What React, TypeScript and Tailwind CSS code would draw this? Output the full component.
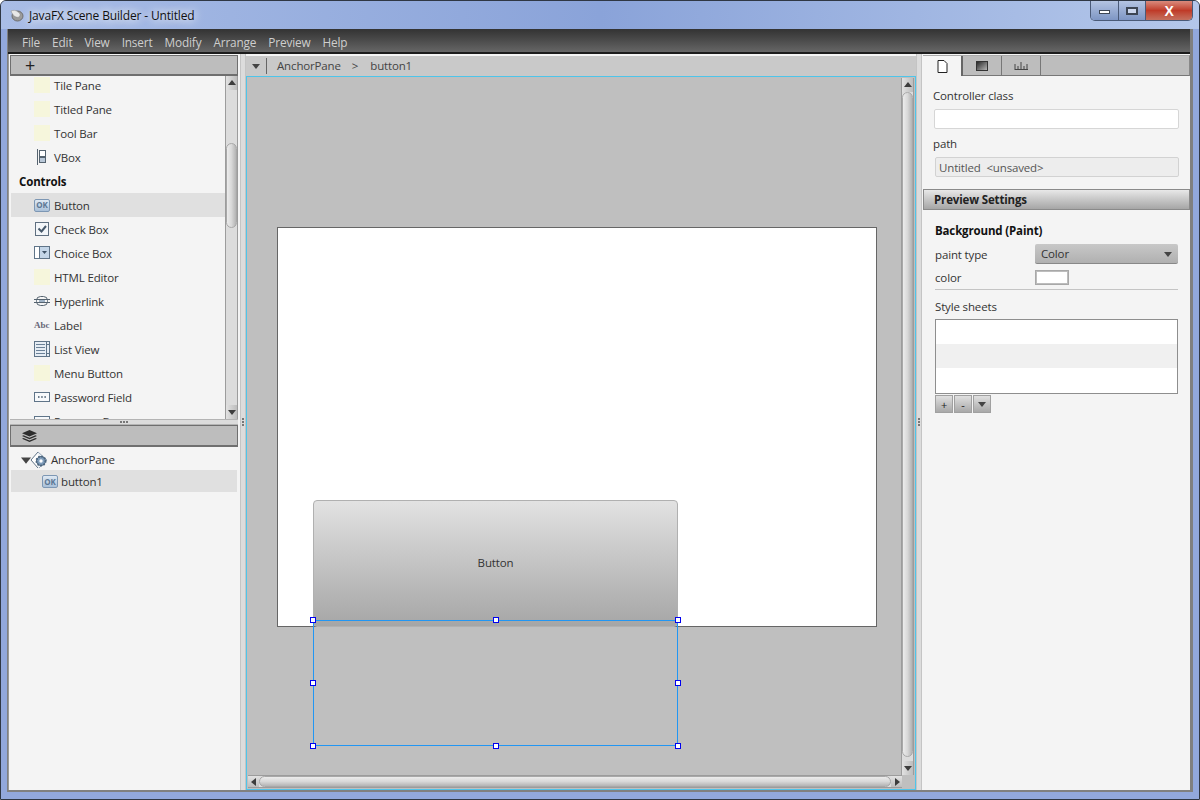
import React from "react";

const FONT = "font-['Open_Sans','Noto_Sans',sans-serif]";

function Blank() {
  return <div className="w-[16px] h-[16px] bg-[#f6f6dc]" />;
}
function OkIcon() {
  return (
    <div className="w-[16px] h-[13px] rounded-[2px] border border-[#7d97b4] bg-gradient-to-b from-[#dfe9f3] to-[#a9c0d8] flex items-center justify-center text-[8px] tracking-normal leading-none font-bold text-[#5b7794]">
      OK
    </div>
  );
}
function VBoxIcon() {
  return (
    <svg width="16" height="16" viewBox="0 0 16 16">
      <path d="M3.5 0v16" stroke="#55636f" />
      <rect x="5.5" y="1.5" width="6" height="6" fill="#fff" stroke="#55636f" />
      <rect x="5.5" y="8.5" width="6" height="5" fill="#b9c8d8" stroke="#55636f" />
    </svg>
  );
}
function CheckIcon() {
  return (
    <svg width="16" height="16" viewBox="0 0 16 16">
      <rect x="1.5" y="1.5" width="13" height="13" fill="#f3f6f9" stroke="#5f6f80" />
      <path d="M4.5 7.5l3 3 4.5-5.5" fill="none" stroke="#47596b" strokeWidth="2" />
    </svg>
  );
}
function ChoiceIcon() {
  return (
    <svg width="16" height="14" viewBox="0 0 16 14">
      <rect x="0.5" y="0.5" width="15" height="12" fill="#fff" stroke="#5f7488" />
      <rect x="5" y="1" width="10" height="11" fill="#c4d6e8" />
      <path d="M5.5 0v13" stroke="#5f7488" />
      <path d="M8 5h5l-2.500 3z" fill="#3f5367" />
    </svg>
  );
}
function LinkIcon() {
  return (
    <svg width="16" height="12" viewBox="0 0 16 12">
      <rect x="2.500" y="1.500" width="11" height="9" rx="4" fill="none" stroke="#55636f" />
      <path d="M0 4.500h16M0 7.500h16" stroke="#55636f" />
      <path d="M5 6h6" stroke="#9fb3c6" strokeWidth="2" />
    </svg>
  );
}
function AbcIcon() {
  return <div className="w-[16px] text-[9px] tracking-normal leading-none text-[#667] font-['Liberation_Serif',serif] font-bold whitespace-nowrap">Abc</div>;
}
function ListIcon() {
  return (
    <svg width="16" height="16" viewBox="0 0 16 16">
      <rect x="0.500" y="0.500" width="15" height="15" fill="#e6edf4" stroke="#5f7488" />
      <path d="M2 3.500h9M2 6.500h9M2 9.500h9M2 12.500h9" stroke="#6b8197" />
      <path d="M12.500 0v16" stroke="#5f7488" />
      <path d="M13 3.500h2M13 12.500h2" stroke="#5f7488" />
    </svg>
  );
}
function PwdIcon() {
  return (
    <svg width="16" height="10" viewBox="0 0 16 10">
      <rect x="0.500" y="0.500" width="15" height="9" fill="#f7f9fb" stroke="#5f7488" />
      <path d="M4 5h1.500M7.200 5h1.500M10.400 5h1.500" stroke="#3f5367" strokeWidth="1.500" />
    </svg>
  );
}
function GearDiamond() {
  return (
    <svg width="18" height="18" viewBox="0 0 18 18">
      <path d="M8 1L1 9l7 8" fill="#fff" stroke="#607487" />
      <path d="M8 1l9 8-8 8" fill="#eef3f7" stroke="#9aaabb" />
      <circle cx="11" cy="10" r="4.500" fill="#7f9dbb" stroke="#4c657d" />
      <circle cx="11" cy="10" r="4.500" fill="none" stroke="#4c657d" strokeWidth="2" strokeDasharray="1.500 1.500" />
      <circle cx="11" cy="10" r="1.700" fill="#fff" />
    </svg>
  );
}
function Layers() {
  return (
    <svg width="15" height="12" viewBox="0 0 15 12">
      <path d="M7.500 0L15 3.200 7.500 6.400 0 3.200z" fill="#2d2d2d" />
      <path d="M1.500 5.200L0 6l7.500 3.200L15 6l-1.500-.8-6 2.600z" fill="#2d2d2d" />
      <path d="M1.500 8L0 8.800 7.500 12 15 8.800 13.500 8l-6 2.600z" fill="#2d2d2d" />
    </svg>
  );
}
function AppIcon() {
  return (
    <svg width="14" height="13" viewBox="0 0 14 13">
      <ellipse cx="7.500" cy="7" rx="5.500" ry="5" fill="#9a9a9a" stroke="#6c6c6c" />
      <path d="M1 2c2-1 5-1 7 1 2 1 3 3 1 5-3 1-6-1-8-6z" fill="#e8e8e8" stroke="#888" strokeWidth=".5" />
    </svg>
  );
}
function Arrow({ dir, size = 4, color = "#3d3d3d" }: { dir: "up" | "down" | "left" | "right"; size?: number; color?: string }) {
  const paths = {
    up: "M0 6L4 1l4 5z",
    down: "M0 2h8L4 7z",
    left: "M6 0v8L1 4z",
    right: "M2 0v8l5-4z",
  };
  return (
    <svg width={size * 2} height={size * 2} viewBox="0 0 8 8">
      <path d={paths[dir]} fill={color} />
    </svg>
  );
}

function VScroll({ before, thumb }: { before: number; thumb: number }) {
  return (
    <div className="w-[13px] h-full flex flex-col bg-[#dcdcdc] border-x border-[#9c9c9c] shrink-0">
      <div className="h-[14px] shrink-0 flex items-center justify-center bg-gradient-to-r from-[#e2e2e2] to-[#bdbdbd]">
        <Arrow dir="up" />
      </div>
      <div className="flex-1 flex flex-col min-h-0">
        <div className="shrink-0" style={{ height: before }} />
        <div className="shrink-0 rounded-full border border-[#a8a8a8] bg-gradient-to-r from-[#ececec] via-[#d8d8d8] to-[#b4b4b4]" style={{ height: thumb }} />
      </div>
      <div className="h-[14px] shrink-0 flex items-center justify-center bg-gradient-to-r from-[#e2e2e2] to-[#bdbdbd]">
        <Arrow dir="down" />
      </div>
    </div>
  );
}

const items: { label: string; icon: React.ReactNode; sel?: boolean }[] = [
  { label: "Tile Pane", icon: <Blank /> },
  { label: "Titled Pane", icon: <Blank /> },
  { label: "Tool Bar", icon: <Blank /> },
  { label: "VBox", icon: <VBoxIcon /> },
  { label: "Button", icon: <OkIcon />, sel: true },
  { label: "Check Box", icon: <CheckIcon /> },
  { label: "Choice Box", icon: <ChoiceIcon /> },
  { label: "HTML Editor", icon: <Blank /> },
  { label: "Hyperlink", icon: <LinkIcon /> },
  { label: "Label", icon: <AbcIcon /> },
  { label: "List View", icon: <ListIcon /> },
  { label: "Menu Button", icon: <Blank /> },
  { label: "Password Field", icon: <PwdIcon /> },
  { label: "Progress Bar", icon: <PwdIcon /> },
];

function LibRow({ label, icon, sel }: { label: string; icon: React.ReactNode; sel?: boolean }) {
  return (
    <div className={`h-[24px] shrink-0 flex items-center pl-[23px] ${sel ? "bg-[#e0e0e0]" : ""}`}>
      <div className="w-[16px] flex justify-center">{icon}</div>
      <span className="ml-[4px] pt-[2px] text-[#333]">{label}</span>
    </div>
  );
}

function Handle({ cls }: { cls: string }) {
  return <div className={`absolute w-[6px] h-[6px] bg-white border border-[#0000ee] ${cls}`} />;
}

function FieldLabel({ children, cls }: { children: React.ReactNode; cls: string }) {
  return <div className={`text-[#333] leading-[16px] ${cls}`}>{children}</div>;
}

function SmallBtn({ children }: { children: React.ReactNode }) {
  return (
    <div className="w-[18px] h-[18px] flex items-center justify-center border border-[#a0a0a0] bg-gradient-to-b from-[#e0e0e0] to-[#a8a8a8] text-[11px] leading-none text-[#222]">
      {children}
    </div>
  );
}

function Dots({ vertical }: { vertical?: boolean }) {
  return (
    <div className={`flex gap-[1px] ${vertical ? "flex-col" : ""}`}>
      <div className="w-[2px] h-[2px] bg-[#777]" />
      <div className="w-[2px] h-[2px] bg-[#777]" />
      <div className="w-[2px] h-[2px] bg-[#777]" />
    </div>
  );
}

export default function App() {
  return (
    <div className={`${FONT} w-[1200px] h-[800px] flex flex-col overflow-hidden rounded-t-[6px] border border-[#2f3744] bg-[#92a8dc] text-[11.5px] tracking-[-0.15px]`}>
      {/* title bar */}
      <div className="h-[28px] shrink-0 flex items-start bg-gradient-to-r from-[#a9bde6] via-[#8aa3d9] to-[#b4c7ea]">
        <div className="mt-[8px] ml-[9px]"><AppIcon /></div>
        <span className="ml-[5px] mt-[6px] text-[12px] leading-[18px] text-[#111] [text-shadow:0_0_8px_#ffffff,0_0_12px_#ffffff]">JavaFX Scene Builder - Untitled</span>
        <div className="ml-auto mr-[6px] flex h-[20px] w-[103px] rounded-b-[5px] border border-t-0 border-[#4a5a78] overflow-hidden">
          <div className="w-[28px] flex items-end justify-center pb-[6px] border-r border-[#4a5a78] bg-gradient-to-b from-[#b4c4e2] to-[#7e96c4]">
            <div className="w-[9px] h-[2px] bg-white border border-[#3d4654] box-content" />
          </div>
          <div className="w-[27px] flex items-center justify-center border-r border-[#4a5a78] bg-gradient-to-b from-[#b4c4e2] to-[#7e96c4]">
            <div className="w-[8px] h-[4px] bg-[#cdd8ee] border-2 border-[#3d4654] box-content" />
          </div>
          <div className="flex-1 flex items-center justify-center bg-gradient-to-b from-[#d98a7c] via-[#bf3a28] to-[#c4705f] text-white font-bold text-[14px] leading-none font-['Liberation_Sans',sans-serif]">
            X
          </div>
        </div>
      </div>

      {/* client */}
      <div className="flex-1 min-h-0 mx-[6px] flex flex-col border-l border-r-[3px] border-b-2 border-[#808080]">
        {/* menu */}
        <div className="h-[25px] shrink-0 flex items-center gap-[12px] pl-[14px] pt-[5px] text-[#cfcfcf] text-[11.8px] bg-gradient-to-b from-[#333333] to-[#666666] border-b-2 border-[#1c1c1c]">
          {["File", "Edit", "View", "Insert", "Modify", "Arrange", "Preview", "Help"].map((m) => (
            <span key={m}>{m}</span>
          ))}
        </div>

        {/* body */}
        <div className="flex-1 min-h-0 flex bg-[#f4f4f4]">
          {/* left */}
          <div className="w-[232px] shrink-0 flex flex-col pl-[1px] pr-[2px] border-l border-[#9a9a9a]">
            <div className="h-[21px] mt-[1px] shrink-0 flex items-center pl-[14px] bg-[#bdbdbd] border border-[#6f6f6f] border-b-2 text-[#222] text-[18px] leading-none">
              +
            </div>
            <div className="h-[343px] shrink-0 flex overflow-hidden">
              <div className="flex-1 pl-[1px] flex flex-col overflow-hidden -mt-[3px]">
                {items.slice(0, 4).map((i) => (
                  <LibRow key={i.label} {...i} />
                ))}
                <div className="h-[24px] shrink-0 flex items-center pl-[8px] pt-[2px] font-bold text-[#111]">Controls</div>
                {items.slice(4).map((i) => (
                  <LibRow key={i.label} {...i} />
                ))}
              </div>
              <VScroll before={53} thumb={85} />
            </div>
            <div className="h-[6px] shrink-0 flex items-center justify-center bg-[#dcdcdc] border-y border-[#b4b4b4]">
              <Dots />
            </div>
            <div className="h-[22px] shrink-0 flex items-center pl-[11px] bg-[#bdbdbd] border border-[#6f6f6f] border-b-2">
              <Layers />
            </div>
            <div className="flex-1 flex flex-col pt-[2px] pl-[1px] pr-[1px]">
              <div className="h-[21px] flex items-center pl-[10px] text-[#333]">
                <Arrow dir="down" size={5} color="#444" />
                <div className="-ml-[1px]"><GearDiamond /></div>
                <span className="ml-[3px]">AnchorPane</span>
              </div>
              <div className="h-[22px] flex items-center pl-[31px] pt-[1px] bg-[#e0e0e0] text-[#333]">
                <OkIcon />
                <span className="ml-[3px]">button1</span>
              </div>
            </div>
          </div>

          {/* splitter */}
          <div className="w-[6px] shrink-0 bg-[#dcdcdc] border-x border-[#c4c4c4] flex items-center justify-center">
            <Dots vertical />
          </div>

          {/* center */}
          <div className="w-[670px] shrink-0 flex flex-col">
            <div className="h-[22px] shrink-0 flex items-center bg-[#c9c9c9] border-t-2 border-[#f4f4f4] text-[#444]">
              <div className="w-[21px] h-[16px] flex items-center justify-center border-r border-[#666]">
                <Arrow dir="down" color="#444" />
              </div>
              <span className="ml-[10px]">AnchorPane</span>
              <span className="ml-[11px]">&gt;</span>
              <span className="ml-[12px]">button1</span>
            </div>
            <div className="flex-1 min-h-0 flex flex-col border border-[#4ec5ea] bg-[#bfbfbf]">
              <div className="flex-1 min-h-0 flex">
                <div className="flex-1 relative">
                  <div className="absolute left-[30px] top-[150px] w-[600px] h-[400px] bg-white border border-[#666]" />
                  <div className="absolute left-[66px] top-[423px] w-[365px] h-[127px] rounded-[4px] border border-[#b0b0b0] bg-gradient-to-b from-[#e2e2e2] to-[#a6a6a6] flex items-center justify-center pb-[2px] text-[#333]">
                    Button
                  </div>
                  <div className="absolute left-[66px] top-[543px] w-[365px] h-[126px] border border-[#2196f3]" />
                  <Handle cls="left-[63px] top-[540px]" />
                  <Handle cls="left-[246px] top-[540px]" />
                  <Handle cls="left-[428px] top-[540px]" />
                  <Handle cls="left-[63px] top-[603px]" />
                  <Handle cls="left-[428px] top-[603px]" />
                  <Handle cls="left-[63px] top-[666px]" />
                  <Handle cls="left-[246px] top-[666px]" />
                  <Handle cls="left-[428px] top-[666px]" />
                </div>
                <div className="pt-[1px] mr-[1px]">
                  <VScroll before={0} thumb={665} />
                </div>
              </div>
              <div className="h-[13px] shrink-0 mb-[1px] ml-[1px] mr-[13px] flex items-center bg-[#dcdcdc] border-y border-[#9c9c9c]">
                <div className="w-[11px] h-full flex items-center justify-center bg-gradient-to-b from-[#e2e2e2] to-[#bdbdbd]"><Arrow dir="left" /></div>
                <div className="flex-1 h-full rounded-full border border-[#a8a8a8] bg-gradient-to-b from-[#ececec] via-[#d8d8d8] to-[#b4b4b4]" />
                <div className="w-[11px] h-full flex items-center justify-center bg-gradient-to-b from-[#e2e2e2] to-[#bdbdbd]"><Arrow dir="right" /></div>
              </div>
            </div>
          </div>

          {/* splitter */}
          <div className="w-[6px] shrink-0 bg-[#dcdcdc] border-x border-[#c4c4c4] flex items-center justify-center">
            <Dots vertical />
          </div>

          {/* right */}
          <div className="flex-1 min-w-0 flex flex-col">
            <div className="h-[21px] mt-[1px] shrink-0 flex ml-[1px] bg-[#bdbdbd] border-b border-[#777] border-r border-t border-t-[#aaa] border-r-[#888]">
              <div className="w-[40px] bg-[#f4f4f4] flex items-center justify-center border-r-2 border-[#666] -mb-[1px]">
                <svg width="11" height="13" viewBox="0 0 11 13"><path d="M1 .5h6l3 3v9H1z" fill="#fff" stroke="#222" /></svg>
              </div>
              <div className="w-[39px] flex items-center justify-center border-r border-[#777]">
                <svg width="12" height="10" viewBox="0 0 12 10"><defs><linearGradient id="g1" x1="0" y1="0" x2="1" y2="1"><stop offset="0" stopColor="#222" /><stop offset="1" stopColor="#bbb" /></linearGradient></defs><rect x=".5" y=".5" width="11" height="9" fill="url(#g1)" stroke="#333" /></svg>
              </div>
              <div className="w-[39px] flex items-center justify-center border-r border-[#777]">
                <svg width="15" height="8" viewBox="0 0 15 8"><path d="M1 2v6M4 4v4M7 0v8M10 4v4M13 2v6M1 7.500h13" stroke="#444" fill="none" /></svg>
              </div>
            </div>
            <div className="flex flex-col pl-[11px] pr-[11px] pt-[12px]">
              <FieldLabel cls="">Controller class</FieldLabel>
              <div className="h-[20px] mt-[5px] ml-[1px] rounded-[2px] bg-white border border-[#d6d6d6]" />
              <FieldLabel cls="mt-[7px]">path</FieldLabel>
              <div className="h-[20px] mt-[5px] ml-[2px] pl-[3px] pt-[1px] flex items-center rounded-[2px] bg-[#ededed] border border-[#d2d2d2] text-[#555]">
                Untitled&nbsp; &lt;unsaved&gt;
              </div>
            </div>
            <div className="h-[21px] mt-[12px] ml-[1px] shrink-0 flex items-center pl-[10px] font-bold text-[#222] bg-gradient-to-b from-[#e8e8e8] to-[#a6a6a6] border border-[#8a8a8a]">
              Preview Settings
            </div>
            <div className="flex flex-col pl-[13px] pr-[12px] pt-[13px]">
              <div className="font-bold text-[#111] leading-[16px]">Background (Paint)</div>
              <div className="mt-[5px] h-[20px] flex items-center">
                <span className="w-[100px] pt-[2px] text-[#333]">paint type</span>
                <div className="flex-1 h-[20px] flex items-center justify-between px-[6px] rounded-[2px] bg-gradient-to-b from-[#c8c8c8] to-[#b0b0b0] border-b border-[#888] text-[#333]">
                  Color
                  <Arrow dir="down" color="#444" />
                </div>
              </div>
              <div className="mt-[5px] flex items-center">
                <span className="w-[100px] text-[#333]">color</span>
                <div className="w-[34px] h-[15px] bg-white border-2 border-[#bdbdbd] outline outline-1 -outline-offset-1 outline-[#a8a8a8]" />
              </div>
              <div className="mt-[3px] border-t border-[#c4c4c4]" />
              <div className="mt-[9px] text-[#333] leading-[16px]">Style sheets</div>
              <div className="mt-[4px] h-[75px] flex flex-col bg-white border border-[#8e8e8e]">
                <div className="h-[24px]" />
                <div className="h-[24px] bg-[#f0f0f0]" />
                <div className="h-[24px]" />
              </div>
              <div className="mt-[1px] flex gap-[1px]">
                <SmallBtn>+</SmallBtn>
                <SmallBtn>-</SmallBtn>
                <SmallBtn><Arrow dir="down" color="#444" /></SmallBtn>
              </div>
            </div>
          </div>
        </div>
      </div>
      <div className="h-[7px] shrink-0" />
    </div>
  );
}
